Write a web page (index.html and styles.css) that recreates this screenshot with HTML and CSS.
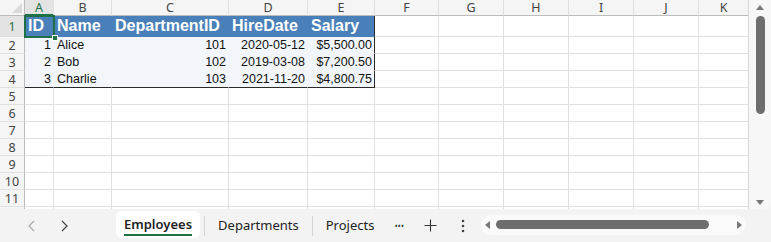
FILE: index.html
```html
<!DOCTYPE html>
<html>
<head>
<meta charset="utf-8">
<link rel="stylesheet" href="styles.css">
</head>
<body>
<div class="app">
  <div class="top">
    <div class="sheet">
      <div class="grid">
        <div class="corner"><span class="tri"></span></div>
        <div class="ch sel">A</div><div class="ch">B</div><div class="ch">C</div><div class="ch">D</div><div class="ch">E</div><div class="ch">F</div><div class="ch">G</div><div class="ch">H</div><div class="ch">I</div><div class="ch">J</div><div class="ch">K</div>

        <div class="rh sel">1</div>
        <div class="c th">ID</div><div class="c th">Name</div><div class="c th">DepartmentID</div><div class="c th">HireDate</div><div class="c th last">Salary</div>
        <div class="c"></div><div class="c"></div><div class="c"></div><div class="c"></div><div class="c"></div><div class="c"></div>

        <div class="rh">2</div>
        <div class="c td r">1</div><div class="c td">Alice</div><div class="c td r">101</div><div class="c td r">2020-05-12</div><div class="c td r last">$5,500.00</div>
        <div class="c"></div><div class="c"></div><div class="c"></div><div class="c"></div><div class="c"></div><div class="c"></div>

        <div class="rh">3</div>
        <div class="c td r">2</div><div class="c td">Bob</div><div class="c td r">102</div><div class="c td r">2019-03-08</div><div class="c td r last">$7,200.50</div>
        <div class="c"></div><div class="c"></div><div class="c"></div><div class="c"></div><div class="c"></div><div class="c"></div>

        <div class="rh">4</div>
        <div class="c td r bot">3</div><div class="c td bot">Charlie</div><div class="c td r bot">103</div><div class="c td r bot">2021-11-20</div><div class="c td r last bot">$4,800.75</div>
        <div class="c"></div><div class="c"></div><div class="c"></div><div class="c"></div><div class="c"></div><div class="c"></div>

        <div class="rh">5</div>
        <div class="c"></div><div class="c"></div><div class="c"></div><div class="c"></div><div class="c"></div><div class="c"></div><div class="c"></div><div class="c"></div><div class="c"></div><div class="c"></div><div class="c"></div>
        <div class="rh">6</div>
        <div class="c"></div><div class="c"></div><div class="c"></div><div class="c"></div><div class="c"></div><div class="c"></div><div class="c"></div><div class="c"></div><div class="c"></div><div class="c"></div><div class="c"></div>
        <div class="rh">7</div>
        <div class="c"></div><div class="c"></div><div class="c"></div><div class="c"></div><div class="c"></div><div class="c"></div><div class="c"></div><div class="c"></div><div class="c"></div><div class="c"></div><div class="c"></div>
        <div class="rh">8</div>
        <div class="c"></div><div class="c"></div><div class="c"></div><div class="c"></div><div class="c"></div><div class="c"></div><div class="c"></div><div class="c"></div><div class="c"></div><div class="c"></div><div class="c"></div>
        <div class="rh">9</div>
        <div class="c"></div><div class="c"></div><div class="c"></div><div class="c"></div><div class="c"></div><div class="c"></div><div class="c"></div><div class="c"></div><div class="c"></div><div class="c"></div><div class="c"></div>
        <div class="rh">10</div>
        <div class="c"></div><div class="c"></div><div class="c"></div><div class="c"></div><div class="c"></div><div class="c"></div><div class="c"></div><div class="c"></div><div class="c"></div><div class="c"></div><div class="c"></div>
        <div class="rh">11</div>
        <div class="c"></div><div class="c"></div><div class="c"></div><div class="c"></div><div class="c"></div><div class="c"></div><div class="c"></div><div class="c"></div><div class="c"></div><div class="c"></div><div class="c"></div>
        <div class="rh"></div>
        <div class="c"></div><div class="c"></div><div class="c"></div><div class="c"></div><div class="c"></div><div class="c"></div><div class="c"></div><div class="c"></div><div class="c"></div><div class="c"></div><div class="c"></div>
      </div>
      <div class="selbox"><span class="handle"></span></div>
    </div>
    <div class="vscroll">
      <span class="arrow up"></span>
      <span class="vthumb"></span>
      <span class="vspace"></span>
      <span class="arrow down"></span>
    </div>
  </div>
  <div class="tabbar">
    <div class="nav">
      <span class="navbtn dis">
        <svg width="10" height="12" viewBox="0 0 10 12"><path d="M7 1 L2 6 L7 11" fill="none" stroke="#a8a8a8" stroke-width="1.2"/></svg>
      </span>
      <span class="navbtn">
        <svg width="10" height="12" viewBox="0 0 10 12"><path d="M3 1 L8 6 L3 11" fill="none" stroke="#444" stroke-width="1.2"/></svg>
      </span>
    </div>
    <div class="tabs">
      <div class="tab active"><span class="tlabel">Employees</span></div>
      <span class="sep"></span>
      <div class="tab">Departments</div>
      <span class="sep"></span>
      <div class="tab">Projects</div>
      <span class="tool dots">•••</span>
      <span class="tool plus">
        <svg width="13" height="13" viewBox="0 0 13 13"><path d="M6.5 0.5 V12.5 M0.5 6.5 H12.5" stroke="#333" stroke-width="1.1"/></svg>
      </span>
      <span class="tool more">
        <svg width="4" height="14" viewBox="0 0 4 14"><circle cx="2" cy="2" r="1.3" fill="#444"/><circle cx="2" cy="7" r="1.3" fill="#444"/><circle cx="2" cy="12" r="1.3" fill="#444"/></svg>
      </span>
    </div>
    <div class="hscroll">
      <span class="harrow left"></span>
      <span class="hthumb"></span>
      <span class="hspace"></span>
      <span class="harrow right"></span>
    </div>
  </div>
</div>
</body>
</html>
```

FILE: styles.css
```css
* { box-sizing: border-box; }
html, body { margin: 0; padding: 0; }
body {
  width: 771px;
  height: 242px;
  overflow: hidden;
  background: #f3f3f3;
  font-family: "Liberation Sans", Arial, sans-serif;
}
.app { display: flex; flex-direction: column; width: 771px; height: 242px; }
.top { display: flex; height: 209px; }
.sheet {
  position: relative;
  width: 749px;
  height: 209px;
  overflow: hidden;
  background: #fff;
  border-right: 1px solid #d6d6d6;
}
.grid {
  display: grid;
  grid-template-columns: 25px 29px 58px 117px 79px 67px 64px 65px 65px 65px 65px 50px;
  grid-template-rows: 16px 21px repeat(11, 17px);
}
.corner {
  position: relative;
  background: #f5f5f5;
  border-right: 1px solid #bcbcbc;
  border-bottom: 1px solid #bcbcbc;
}
.tri {
  position: absolute;
  right: 2px;
  bottom: 2px;
  width: 0; height: 0;
  border-left: 10px solid transparent;
  border-bottom: 10px solid #dadada;
}
.ch {
  background: #f5f5f5;
  border-right: 1px solid #e0e0e0;
  border-bottom: 1px solid #bcbcbc;
  font-family: "Noto Sans", "Liberation Sans", sans-serif;
  font-size: 12.5px;
  color: #444;
  text-align: center;
  line-height: 15px;
}
.ch.sel {
  background: #e3e3e3;
  color: #1e7145;
  border-bottom: 2px solid #1e7145;
}
.rh {
  background: #f5f5f5;
  border-right: 1px solid #bcbcbc;
  border-bottom: 1px solid #e0e0e0;
  font-family: "Noto Sans", "Liberation Sans", sans-serif;
  font-size: 12.5px;
  color: #444;
  text-align: center;
  display: flex;
  align-items: center;
  justify-content: center;
  padding-top: 1px;
}
.rh.sel { background: #e3e3e3; color: #1e7145; }
.c {
  border-right: 1px solid #e1e1e1;
  border-bottom: 1px solid #e1e1e1;
  font-size: 12.5px;
  color: #111;
  white-space: nowrap;
  overflow: hidden;
  display: flex;
  align-items: center;
  padding: 0 2px 0 3px;
}
.c.th {
  background: #4a80b9;
  border-color: #4a80b9;
  color: #fff;
  font-weight: bold;
  font-size: 16px;
  padding-left: 3px;
}
.c.td {
  background: #f2f6fb;
  border-color: #f2f6fb;
}
.c.r { justify-content: flex-end; }
.c.last { border-right-color: #2a2a2a; }
.c.bot { border-bottom-color: #2a2a2a; }
.selbox {
  position: absolute;
  left: 24px;
  top: 15px;
  width: 31px;
  height: 23px;
  border: 2px solid #1e7145;
}
.handle {
  position: absolute;
  right: -5px;
  bottom: -5px;
  width: 6px;
  height: 6px;
  background: #1e7145;
  border: 1px solid #fff;
}
.vscroll {
  width: 22px;
  height: 209px;
  background: #f7f7f7;
  border-bottom-right-radius: 8px;
  display: flex;
  flex-direction: column;
  align-items: center;
  padding: 5px 0 4px 0;
}
.arrow { width: 0; height: 0; border-left: 4px solid transparent; border-right: 4px solid transparent; }
.arrow.up { border-bottom: 5px solid #777; }
.arrow.down { border-top: 5px solid #777; }
.vthumb {
  margin-top: 6px;
  width: 9px;
  height: 98px;
  border-radius: 5px;
  background: #6e6e6e;
}
.vspace { flex: 1; }
.tabbar {
  flex: 1;
  display: flex;
  align-items: stretch;
  font-family: "Noto Sans", "Open Sans", sans-serif;
  font-size: 13px;
  color: #222;
}
.nav { display: flex; align-items: center; padding-left: 16px; width: 116px; }
.navbtn { width: 32px; display: flex; justify-content: center; align-items: center; height: 20px; }
.tabs { display: flex; align-items: center; }
.tab {
  height: 100%;
  display: flex;
  align-items: center;
  padding: 0 13px 2px 13px;
}
.tab.active {
  background: #fff;
  margin-top: 2px;
  height: 27px;
  align-self: flex-start;
  border-radius: 6px;
  padding: 0 8px;
  margin-right: 4px;
  font-weight: 600;
}
.tlabel {
  display: inline-block;
  border-bottom: 2px solid #1e7145;
  line-height: 19px;
  margin-top: 2px;
}
.sep { width: 1px; height: 20px; background: #d4d4d4; }
.tool {
  display: flex;
  justify-content: center;
  align-items: center;
}
.dots { font-size: 8px; color: #333; width: 24px; }
.plus { width: 38px; }
.more { width: 28px; }
.hscroll {
  margin-left: 4px;
  width: 265px;
  height: 20px;
  align-self: center;
  margin-top: -2px;
  background: #fafafa;
  border-radius: 10px;
  display: flex;
  align-items: center;
  padding: 0 4px;
}
.harrow { width: 0; height: 0; border-top: 4px solid transparent; border-bottom: 4px solid transparent; }
.harrow.left { border-right: 5px solid #777; }
.harrow.right { border-left: 5px solid #777; }
.hthumb {
  margin-left: 6px;
  width: 213px;
  height: 9px;
  border-radius: 5px;
  background: #6e6e6e;
}
.hspace { flex: 1; }
```
